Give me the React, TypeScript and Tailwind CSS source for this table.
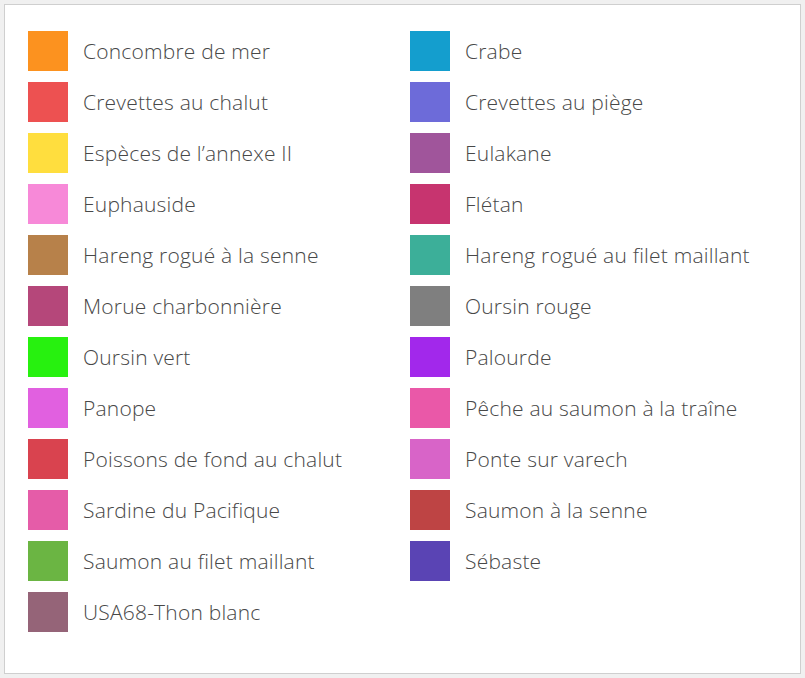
const left = [
  ["Concombre de mer", "#fc921f"],
  ["Crevettes au chalut", "#ed5151"],
  ["Espèces de l’annexe II", "#ffde3e"],
  ["Euphauside", "#f789d8"],
  ["Hareng rogué à la senne", "#b7814a"],
  ["Morue charbonnière", "#b5477a"],
  ["Oursin vert", "#27f10f"],
  ["Panope", "#e160e0"],
  ["Poissons de fond au chalut", "#d9434f"],
  ["Sardine du Pacifique", "#e55ca8"],
  ["Saumon au filet maillant", "#6bb543"],
  ["USA68-Thon blanc", "#956478"],
];

const right = [
  ["Crabe", "#149ece"],
  ["Crevettes au piège", "#6d6bd9"],
  ["Eulakane", "#a0559b"],
  ["Flétan", "#c7346f"],
  ["Hareng rogué au filet maillant", "#3caf99"],
  ["Oursin rouge", "#7f7f7f"],
  ["Palourde", "#a228eb"],
  ["Pêche au saumon à la traîne", "#ea58a8"],
  ["Ponte sur varech", "#d864c8"],
  ["Saumon à la senne", "#be4444"],
  ["Sébaste", "#5a44b4"],
];

function LegendItem({ label, color }: { label: string; color: string }) {
  return (
    <div className="flex h-[40px] items-center gap-[15px]">
      <div className="h-[40px] w-[40px] shrink-0" style={{ backgroundColor: color }} />
      <span className="whitespace-nowrap text-[21px] font-light leading-none tracking-[0.2px] text-[#484848]">
        {label}
      </span>
    </div>
  );
}

export default function App() {
  return (
    <div className="h-[678px] w-[805px] bg-[#f0f0f0] pl-[4px] pt-[4px] font-['Open_Sans',sans-serif]">
      <div className="h-[670px] w-[797px] border border-[#cfcfcf] bg-white pl-[23px] pt-[26px]">
        <div className="grid grid-cols-[382px_1fr]">
          <div className="flex flex-col gap-[11px]">
            {left.map(([l, c]) => (
              <LegendItem key={l} label={l} color={c} />
            ))}
          </div>
          <div className="flex flex-col gap-[11px]">
            {right.map(([l, c]) => (
              <LegendItem key={l} label={l} color={c} />
            ))}
          </div>
        </div>
      </div>
    </div>
  );
}
